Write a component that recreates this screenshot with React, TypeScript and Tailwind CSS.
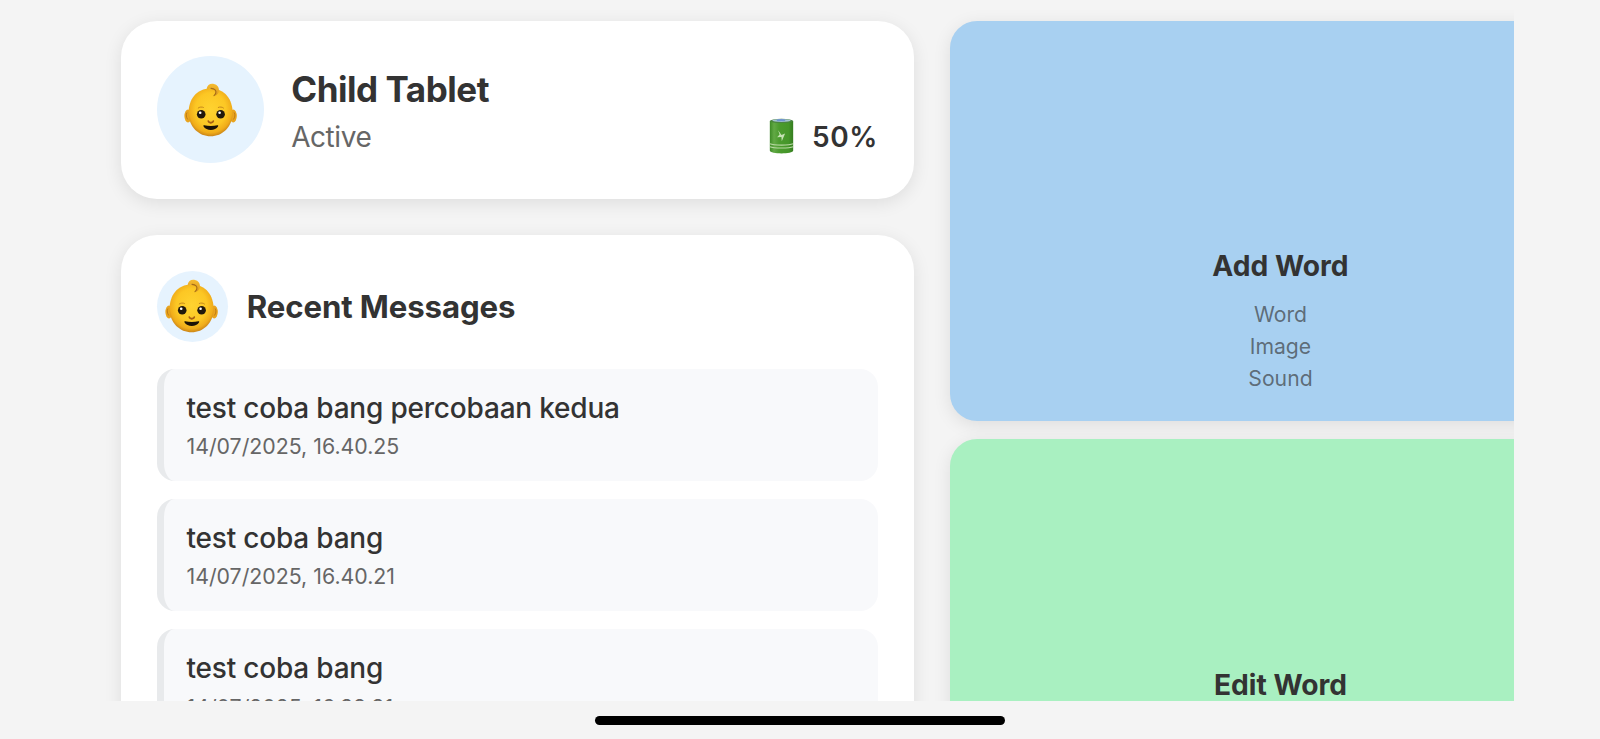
import React from "react";

function Baby({ className }: { className: string }) {
  return (
    <svg viewBox="0 0 54 54" className={className} aria-hidden="true">
      <defs>
        <radialGradient id="skin" cx="50%" cy="44%" r="58%">
          <stop offset="0" stopColor="#ffd330" />
          <stop offset="0.6" stopColor="#fcc724" />
          <stop offset="0.84" stopColor="#f0ac1a" />
          <stop offset="1" stopColor="#c07a18" />
        </radialGradient>
        <linearGradient id="curl" x1="0" y1="0" x2="0" y2="1">
          <stop offset="0" stopColor="#f6bc30" />
          <stop offset="1" stopColor="#dc9a20" />
        </linearGradient>
      </defs>
      <ellipse cx="4" cy="33" rx="3.600" ry="6.400" fill="#e9a41e" />
      <ellipse cx="49.200" cy="33" rx="3.600" ry="6.400" fill="#e9a41e" />
      <path d="M3 29.500c-1.200 2-.8 5 .8 7M50.200 29.500c1.200 2 .8 5-.8 7" stroke="#c07c16" strokeWidth="1" fill="none" />
      <path
        d="M26.600 5.500C41 5.500 48.600 16.500 48.600 30c0 14-10.400 23.300-22 23.300S4.600 44 4.600 30C4.600 16.500 12.200 5.500 26.600 5.500Z"
        fill="url(#skin)"
      />
      <path
        d="M22.500 6.200C23.200 2 26 .3 29.200.8c4.400.7 6.800 4.600 5.300 8.600-.8 2-2.600 3.200-4.300 3.500 1-1.400 2-3 .9-5-1.400-2.400-4.800-2.600-8.600-1.700Z"
        fill="url(#curl)"
      />
      <path d="M27 5.400c3.800.2 5.500 2.300 4.800 4.600-.3 1-1 2-1.800 2.600" stroke="#a56c18" strokeWidth="1.100" fill="none" strokeLinecap="round" />
      <path d="M14.200 25c1.200-1.100 3.700-1.300 5.200-.6M34.300 24.400c1.600-.7 4-.5 5.200.6" stroke="#bd7f1a" strokeWidth=".9" fill="none" strokeLinecap="round" />
      <circle cx="17.200" cy="31.300" r="4.300" fill="#21180c" />
      <circle cx="36.600" cy="31.300" r="4.300" fill="#21180c" />
      <circle cx="16.200" cy="29.800" r="1.300" fill="#fff" />
      <circle cx="35.600" cy="29.800" r="1.300" fill="#fff" />
      <path d="M24.300 38.200c.3 1.600 1.300.9 2.500 1.700 1.200-.8 2.200-.1 2.500-1.700" stroke="#a85f12" strokeWidth="1.700" fill="none" strokeLinecap="round" />
      <path d="M20.200 42.300c4.100.9 9.100.9 13.200 0 .8-.1 1 .5.600 1.200-2.400 4.600-12 4.600-14.400 0-.4-.7-.2-1.300.6-1.200Z" fill="#1c1206" />
    </svg>
  );
}

function Battery() {
  return (
    <svg viewBox="0 0 25 37" className="h-[36px] w-[25px]" aria-hidden="true">
      <defs>
        <linearGradient id="cell" x1="0" x2="1">
          <stop offset="0" stopColor="#3d8a26" />
          <stop offset="0.18" stopColor="#62a945" />
          <stop offset="0.4" stopColor="#4b9b2e" />
          <stop offset="0.8" stopColor="#45962a" />
          <stop offset="1" stopColor="#357d20" />
        </linearGradient>
      </defs>
      <path d="M.5 3v30.500c0 4 24 4 24 0V3Z" fill="url(#cell)" />
      <ellipse cx="12.500" cy="3" rx="12" ry="2.200" fill="#4a8540" />
      <ellipse cx="12.500" cy="2.600" rx="9.500" ry="1.500" fill="#a5c3d2" />
      <ellipse cx="12" cy="2.200" rx="4.500" ry="1.200" fill="#6f93cf" />
      <path d="M9 12.500l3.500 5 3.700-1.500L12.800 24l-.4-4.500L8 19.800 10.500 17Z" fill="#c5e1b4" />
      <path d="M.7 26.500c3.500 1.800 20 1.800 23.600 0M.7 29.500c3.500 1.800 20 1.800 23.600 0" stroke="#b9d9a4" strokeWidth="1.200" fill="none" />
    </svg>
  );
}

const messages = [
  { text: "test coba bang percobaan kedua", time: "14/07/2025, 16.40.25" },
  { text: "test coba bang", time: "14/07/2025, 16.40.21" },
  { text: "test coba bang", time: "14/07/2025, 16.38.31" },
];

const cardShadow = "shadow-[0_4px_18px_rgba(0,0,0,0.095)]";

export default function App() {
  return (
    <div className="flex h-[739px] w-[1600px] flex-col overflow-hidden bg-[#f4f4f4] font-['Inter',sans-serif] text-[#333333]">
      <main className="mx-[86px] flex h-[701px] shrink-0 items-start gap-9 overflow-hidden pt-[20.500px] pl-[35.200px]">
        <div className="flex w-[792.800px] shrink-0 flex-col gap-9">
          <section className={`flex h-[178px] items-center rounded-[36px] bg-white px-[36px] ${cardShadow}`}>
            <div className="flex size-[107px] shrink-0 items-center justify-center rounded-full bg-[#e6f3fe]">
              <Baby className="size-[54px]" />
            </div>
            <div className="ml-[27px] flex flex-1 flex-col pt-[7px]">
              <h1 className="text-[35px] leading-[44px] font-bold tracking-[-0.45px]">Child Tablet</h1>
              <div className="mt-[2px] flex h-[46px] items-center justify-between">
                <span className="pt-px text-[28px] tracking-[-0.45px] text-[#666666]">Active</span>
                <div className="flex items-center gap-[18px]">
                  <Battery />
                  <span className="pt-[2px] text-[28px] font-semibold tracking-[0.6px]">50%</span>
                </div>
              </div>
            </div>
          </section>
          <section className={`flex h-[700px] flex-col rounded-[36px] bg-white px-[35.500px] pt-[36px] ${cardShadow}`}>
            <div className="flex items-center gap-[19px]">
              <div className="flex size-[71px] shrink-0 items-center justify-center rounded-full bg-[#e6f3fe]">
                <Baby className="size-[54px]" />
              </div>
              <h2 className="pt-px text-[31.200px] leading-[40px] font-bold tracking-[-0.1px]">Recent Messages</h2>
            </div>
            <ul className="mt-[27px] flex flex-col gap-[18px]">
              {messages.map((m, i) => (
                <li key={i} className="flex h-[112.300px] flex-col rounded-[18px] border-l-[7px] border-[#e8eaec] bg-[#f8f9fb] pt-[21px] pl-[22.800px]">
                  <span className="text-[28px] leading-[36px] font-medium tracking-[-0.200px]">{m.text}</span>
                  <span className="mt-[6.500px] text-[21.300px] leading-[28px] text-[#666666]">{m.time}</span>
                </li>
              ))}
            </ul>
          </section>
        </div>
        <div className="flex w-[661px] shrink-0 flex-col gap-[18px] text-center">
          <section className={`flex h-[400px] flex-col items-center justify-end rounded-[27px] bg-[#a8d0f1] pb-[26.500px] ${cardShadow}`}>
            <h2 className="text-[28.200px] leading-[36px] font-bold">Add Word</h2>
            <div className="mt-[14px] flex flex-col text-[21.200px] leading-[32px] text-[#333333]/65">
              <span>Word</span>
              <span>Image</span>
              <span>Sound</span>
            </div>
          </section>
          <section className={`flex h-[400px] flex-col items-center justify-end rounded-[27px] bg-[#a9f0c1] pb-[136px] ${cardShadow}`}>
            <h2 className="text-[28.200px] leading-[36px] font-bold">Edit Word</h2>
          </section>
        </div>
      </main>
      <div className="mx-auto mt-[14.500px] h-[9px] w-[410px] shrink-0 rounded-full bg-black" />
    </div>
  );
}
